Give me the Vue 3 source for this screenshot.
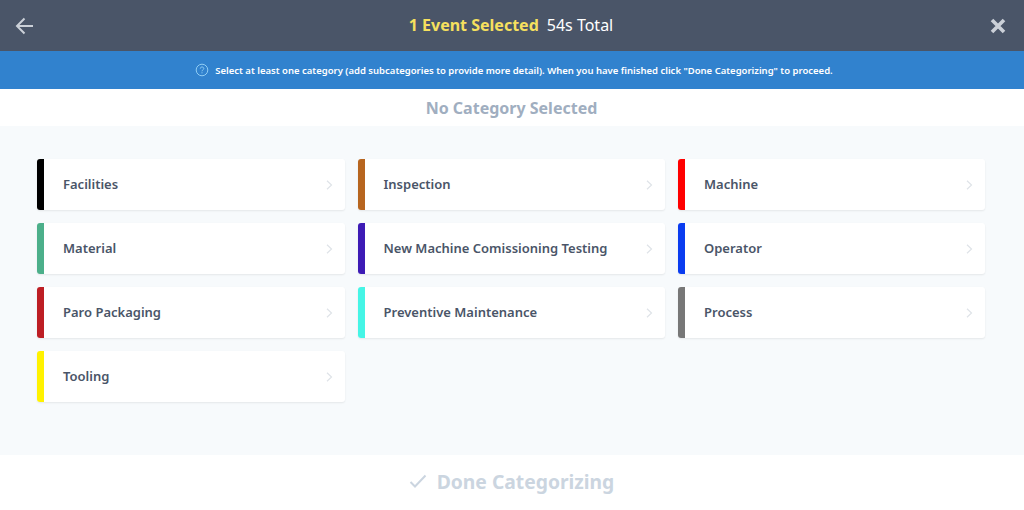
<script setup>
const categories = [
  { name: 'Facilities', color: '#000000' },
  { name: 'Inspection', color: '#b7651f' },
  { name: 'Machine', color: '#ff0000' },
  { name: 'Material', color: '#4caf8a' },
  { name: 'New Machine Comissioning Testing', color: '#3d1bb5' },
  { name: 'Operator', color: '#0a3cf0' },
  { name: 'Paro Packaging', color: '#bd1e24' },
  { name: 'Preventive Maintenance', color: '#45f5e6' },
  { name: 'Process', color: '#777777' },
  { name: 'Tooling', color: '#fff200' }
]
</script>

<template>
  <div class="page">
    <header class="top">
      <svg class="back" width="20" height="18" viewBox="0 0 20 18" fill="none" stroke="#cbd0d8" stroke-width="2">
        <path d="M18 9H2M9.500 1.500L2 9l7.500 7.500" />
      </svg>
      <div class="title">
        <span class="sel">1 Event Selected</span>
        <span class="total">54s Total</span>
      </div>
      <svg class="close" width="16" height="16" viewBox="0 0 16 16" fill="none" stroke="#cbd0d8" stroke-width="3.600">
        <path d="M2 2l12 12M14 2L2 14" />
      </svg>
    </header>
    <div class="info">
      <svg width="14" height="14" viewBox="0 0 14 14" fill="none" stroke="#90cdf4" stroke-width="1">
        <circle cx="7" cy="7" r="5.800" />
        <path d="M5.300 5.600C5.300 4.600 6 4 7 4s1.800.6 1.800 1.500C8.800 6.800 7 6.800 7 8.300M7 9.300v1" />
      </svg>
      <span>Select at least one category (add subcategories to provide more detail). When you have finished click "Done Categorizing" to proceed.</span>
    </div>
    <div class="status">No Category Selected</div>
    <main class="body">
      <div class="grid">
        <div v-for="c in categories" :key="c.name" class="card">
          <i class="bar" :style="{ background: c.color }"></i>
          <span class="name">{{ c.name }}</span>
          <svg class="chev" width="7" height="10" viewBox="0 0 7 10" fill="none" stroke="#dfe3e8" stroke-width="1.200">
            <path d="M1 .8L5.500 5 1 9.200" />
          </svg>
        </div>
      </div>
    </main>
    <footer class="foot">
      <svg width="18" height="14" viewBox="0 0 18 14" fill="none" stroke="#cbd5e0" stroke-width="2">
        <path d="M1.500 8l4.500 4.500L16.500 1.500" />
      </svg>
      <span>Done Categorizing</span>
    </footer>
  </div>
</template>

<style>
html, body { margin: 0; background: #fff; }
</style>

<style scoped>
.page {
  width: 1024px;
  height: 510px;
  overflow: hidden;
  display: flex;
  flex-direction: column;
  font-family: "Noto Sans", "Open Sans", sans-serif;
}
.top {
  height: 51px;
  flex: none;
  background: #4a5568;
  display: flex;
  align-items: center;
  justify-content: space-between;
  padding: 0 18px 0 15px;
  position: relative;
}
.title {
  position: absolute;
  left: 0;
  right: 2px;
  text-align: center;
  font-size: 16px;
  line-height: 51px;
}
.sel { color: #f6e05e; font-weight: 700; margin-right: 8px; }
.total { color: #fff; }
.info {
  height: 38px;
  flex: none;
  background: #3182ce;
  color: #fff;
  display: flex;
  align-items: center;
  justify-content: center;
  gap: 6px;
  font-size: 9.500px;
  font-weight: 600;
  padding-left: 4px;
}
.status {
  height: 37px;
  flex: none;
  background: #fff;
  color: #a0aec0;
  font-size: 16px;
  font-weight: 700;
  line-height: 38px;
  text-align: center;
  padding-right: 1px;
}
.body {
  flex: 1;
  background: #f7fafc;
  padding: 33px 0 0 37px;
}
.grid {
  display: grid;
  grid-template-columns: 307.500px 307.500px 307px;
  column-gap: 13px;
  row-gap: 13px;
}
.card {
  height: 51px;
  background: #fff;
  border-radius: 3px;
  box-shadow: 0 1px 2px rgba(0, 0, 0, 0.08);
  display: flex;
  align-items: center;
  overflow: hidden;
}
.bar { width: 7px; height: 100%; flex: none; }
.name {
  flex: 1;
  margin-left: 19px;
  padding-bottom: 2px;
  color: #4a5568;
  font-size: 13px;
  font-weight: 600;
}
.chev { margin-right: 12px; flex: none; }
.foot {
  height: 55px;
  flex: none;
  background: #fff;
  color: #cbd5e0;
  display: flex;
  align-items: center;
  justify-content: center;
  gap: 10px;
  font-size: 19.300px;
  font-weight: 700;
  padding: 0 1px 3px 0;
  box-sizing: border-box;
}
</style>
